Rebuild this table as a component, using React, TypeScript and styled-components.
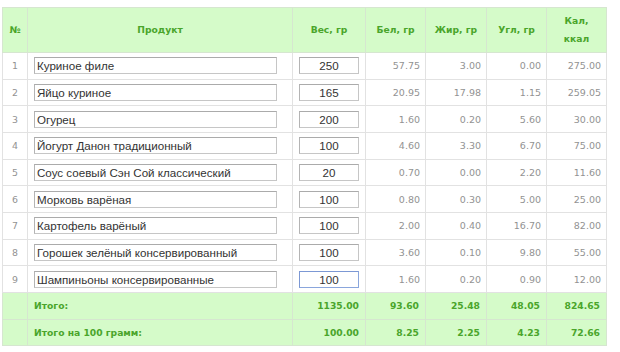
import React from "react";
import styled, { createGlobalStyle } from "styled-components";

const Global = createGlobalStyle`
  html, body { margin: 0; padding: 0; background: #fff; }
  body { font-family: "DejaVu Sans", Verdana, sans-serif; }
`;

const Page = styled.div`
  padding: 7px 0 0 2px;
`;

const Table = styled.table`
  border-collapse: collapse;
  table-layout: fixed;
  width: 605px;
  border: 1px solid #dcdcdc;
`;

const Col = styled.col<{ $w: number }>`
  width: ${(p) => p.$w}px;
`;

const HeadCell = styled.th`
  box-sizing: border-box;
  height: 45px;
  padding: 0 2px;
  background: #d5fbc9;
  color: #4aa52b;
  font-family: "DejaVu Sans", Verdana, sans-serif;
  font-size: 9.2px;
  font-weight: bold;
  line-height: 18px;
  text-align: center;
  vertical-align: middle;
  border: 1px solid #d6e6d0;
`;

const Row = styled.tr`
  height: 26.67px;
`;

const NumCell = styled.td`
  box-sizing: border-box;
  padding: 0;
  text-align: center;
  color: #929292;
  font-size: 9.4px;
  border: 1px solid #e2e2e2;
`;

const ProductCell = styled.td`
  box-sizing: border-box;
  padding: 0 0 0 6px;
  border: 1px solid #e2e2e2;
`;

const WeightCell = styled.td`
  box-sizing: border-box;
  padding: 0;
  text-align: center;
  border: 1px solid #e2e2e2;
`;

const ValueCell = styled.td`
  box-sizing: border-box;
  padding: 0 5px 0 0;
  text-align: right;
  color: #929292;
  font-size: 9.5px;
  border: 1px solid #e2e2e2;
`;

const Field = styled.input<{ $w: number; $center?: boolean; $focus?: boolean }>`
  box-sizing: border-box;
  display: block;
  width: ${(p) => p.$w}px;
  height: 17px;
  margin: ${(p) => (p.$center ? "0 auto" : "0")};
  padding: 0 2px;
  border: 1px solid ${(p) => (p.$focus ? "#8aa6dc" : "#c6c6c6")};
  border-top-color: ${(p) => (p.$focus ? "#7c98d4" : "#ababab")};
  border-left-color: ${(p) => (p.$focus ? "#7c98d4" : "#b4b4b4")};
  background: #fff;
  color: #333;
  font-family: "Liberation Sans", Arial, sans-serif;
  font-size: 11.6px;
  text-align: ${(p) => (p.$center ? "center" : "left")};
  outline: none;
`;

const FootRow = styled.tr`
  height: 26.67px;
  background: #d5fbc9;
`;

const FootCell = styled.td<{ $align?: string }>`
  box-sizing: border-box;
  padding: ${(p) => (p.$align === "left" ? "0 0 0 6px" : "0 6px 0 0")};
  text-align: ${(p) => p.$align || "right"};
  color: #4aa52b;
  font-size: 9.2px;
  font-weight: bold;
  border: 1px solid #d6e6d0;
`;

const widths = [25, 265, 73, 60, 61, 60, 60];

const rows = [
  ["Куриное филе", "250", "57.75", "3.00", "0.00", "275.00"],
  ["Яйцо куриное", "165", "20.95", "17.98", "1.15", "259.05"],
  ["Огурец", "200", "1.60", "0.20", "5.60", "30.00"],
  ["Йогурт Данон традиционный", "100", "4.60", "3.30", "6.70", "75.00"],
  ["Соус соевый Сэн Сой классический", "20", "0.70", "0.00", "2.20", "11.60"],
  ["Морковь варёная", "100", "0.80", "0.30", "5.00", "25.00"],
  ["Картофель варёный", "100", "2.00", "0.40", "16.70", "82.00"],
  ["Горошек зелёный консервированный", "100", "3.60", "0.10", "9.80", "55.00"],
  ["Шампиньоны консервированные", "100", "1.60", "0.20", "0.90", "12.00"],
];

const totals = [
  ["Итого:", "1135.00", "93.60", "25.48", "48.05", "824.65"],
  ["Итого на 100 грамм:", "100.00", "8.25", "2.25", "4.23", "72.66"],
];

export default function App() {
  return (
    <Page>
      <Global />
      <Table>
        <colgroup>
          {widths.map((w, i) => (
            <Col key={i} $w={w} />
          ))}
        </colgroup>
        <thead>
          <tr>
            <HeadCell>№</HeadCell>
            <HeadCell>Продукт</HeadCell>
            <HeadCell>Вес, гр</HeadCell>
            <HeadCell>Бел, гр</HeadCell>
            <HeadCell>Жир, гр</HeadCell>
            <HeadCell>Угл, гр</HeadCell>
            <HeadCell>
              Кал,
              <br />
              ккал
            </HeadCell>
          </tr>
        </thead>
        <tbody>
          {rows.map((r, i) => (
            <Row key={i}>
              <NumCell>{i + 1}</NumCell>
              <ProductCell>
                <Field $w={243} defaultValue={r[0]} readOnly />
              </ProductCell>
              <WeightCell>
                <Field $w={60} $center $focus={i === rows.length - 1} defaultValue={r[1]} readOnly />
              </WeightCell>
              <ValueCell>{r[2]}</ValueCell>
              <ValueCell>{r[3]}</ValueCell>
              <ValueCell>{r[4]}</ValueCell>
              <ValueCell>{r[5]}</ValueCell>
            </Row>
          ))}
          {totals.map((t, i) => (
            <FootRow key={i}>
              <FootCell />
              <FootCell $align="left">{t[0]}</FootCell>
              <FootCell>{t[1]}</FootCell>
              <FootCell>{t[2]}</FootCell>
              <FootCell>{t[3]}</FootCell>
              <FootCell>{t[4]}</FootCell>
              <FootCell>{t[5]}</FootCell>
            </FootRow>
          ))}
        </tbody>
      </Table>
    </Page>
  );
}
